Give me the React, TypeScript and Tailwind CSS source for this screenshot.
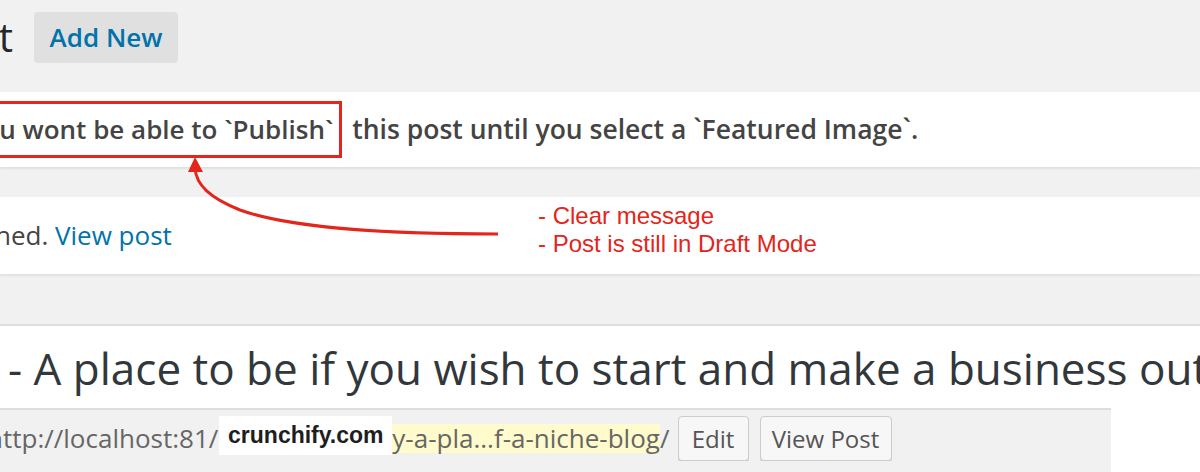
import React from "react";

export default function App() {
  const os = { fontFamily: '"Open Sans", "Noto Sans", sans-serif' };
  const lib = { fontFamily: '"Liberation Sans", Arial, sans-serif' };
  return (
    <div className="relative w-[1200px] h-[472px] overflow-hidden bg-[#f1f1f1]" style={os}>
      {/* Header */}
      <div className="flex items-center pt-[12px] h-[63px]">
        <div className="w-[13px] overflow-hidden flex justify-end shrink-0">
          <span className="whitespace-nowrap text-[40px] leading-none text-[#23282d] mt-[-2px]">Edit Post</span>
        </div>
        <div className="ml-[21px] w-[144px] h-[51px] rounded-[4px] bg-[#e0e0e0] flex items-center justify-center text-[26px] font-semibold text-[#0073aa]">
          Add New
        </div>
      </div>

      {/* Notice 1 */}
      <div className="mt-[29px] h-[75px] bg-white shadow-[0_2px_2px_rgba(0,0,0,0.07)] flex items-center overflow-hidden">
        <div className="whitespace-nowrap ml-[-39px] text-[26px] font-semibold text-[#444] flex items-center">
          <span className="inline-flex items-center h-[57px] border-[3px] border-[#e3251b] pl-[4px] pr-[6px]">
            You wont be able to `Publish`
          </span>
          <span className="ml-[10px] text-[26.5px]">this post until you select a `Featured Image`.</span>
        </div>
      </div>

      {/* Notice 2 */}
      <div className="mt-[30px] h-[77px] bg-white shadow-[0_2px_2px_rgba(0,0,0,0.07)] flex items-center overflow-hidden">
        <div className="whitespace-nowrap ml-[-138px] text-[26px] text-[#444]">
          Post published. <span className="text-[#0073aa]">View post</span>
        </div>
      </div>

      {/* Title input */}
      <div className="mt-[50px] h-[86px] bg-white border-y-2 border-[#dedede] flex items-center overflow-hidden">
        <div className="whitespace-nowrap pl-[8px] text-[44px] text-[#32373c] leading-none mt-[2px]">
          - A place to be if you wish to start and make a business out of a niche blog
        </div>
      </div>

      {/* Permalink row */}
      <div className="flex items-start">
        <div className="flex items-center mt-[6px] h-[45px] overflow-hidden whitespace-nowrap">
          <span className="ml-[-13px] text-[26px] text-[#666]">http://localhost:81/</span>
          <span className="relative ml-[1px] text-[26px] text-[#666] bg-[#fffbcc] h-[29px] flex items-center pl-[173px]">
            y-a-pla...f-a-niche-blog
            <span
              className="absolute left-0 top-[-9px] w-[173px] h-[40px] bg-white flex items-center justify-center text-[23px] font-bold text-[#1e1e1e]"
              style={lib}
            >
              crunchify.com
            </span>
          </span>
          <span className="text-[26px] text-[#666]">/</span>
          <span className="ml-[8px] w-[71px] h-[45px] shrink-0 rounded-[4px] border border-[#ccc] bg-[#f7f7f7] shadow-[0_1px_0_#ccc] flex items-center justify-center text-[24px] text-[#555]">
            Edit
          </span>
          <span className="ml-[11px] w-[132px] h-[45px] shrink-0 rounded-[4px] border border-[#ccc] bg-[#f7f7f7] shadow-[0_1px_0_#ccc] flex items-center justify-center text-[24px] text-[#555]">
            View Post
          </span>
        </div>
        <div className="ml-auto w-[89px] h-[70px] bg-white mt-[-7px] shrink-0" />
      </div>

      {/* Annotation text */}
      <div className="absolute left-[538px] top-[202px] text-[24px] leading-[28px] text-[#e3251b]" style={lib}>
        <div>- Clear message</div>
        <div>- Post is still in Draft Mode</div>
      </div>

      {/* Arrow */}
      <svg className="absolute left-0 top-0" width="1200" height="472" viewBox="0 0 1200 472">
        <path
          d="M498 234 C 380 234, 290 228, 240 210 C 210 198, 196 185, 195 168"
          fill="none"
          stroke="#e3251b"
          strokeWidth="3"
        />
        <polygon points="195,157 188,172 203,172" fill="#e3251b" />
      </svg>
    </div>
  );
}
